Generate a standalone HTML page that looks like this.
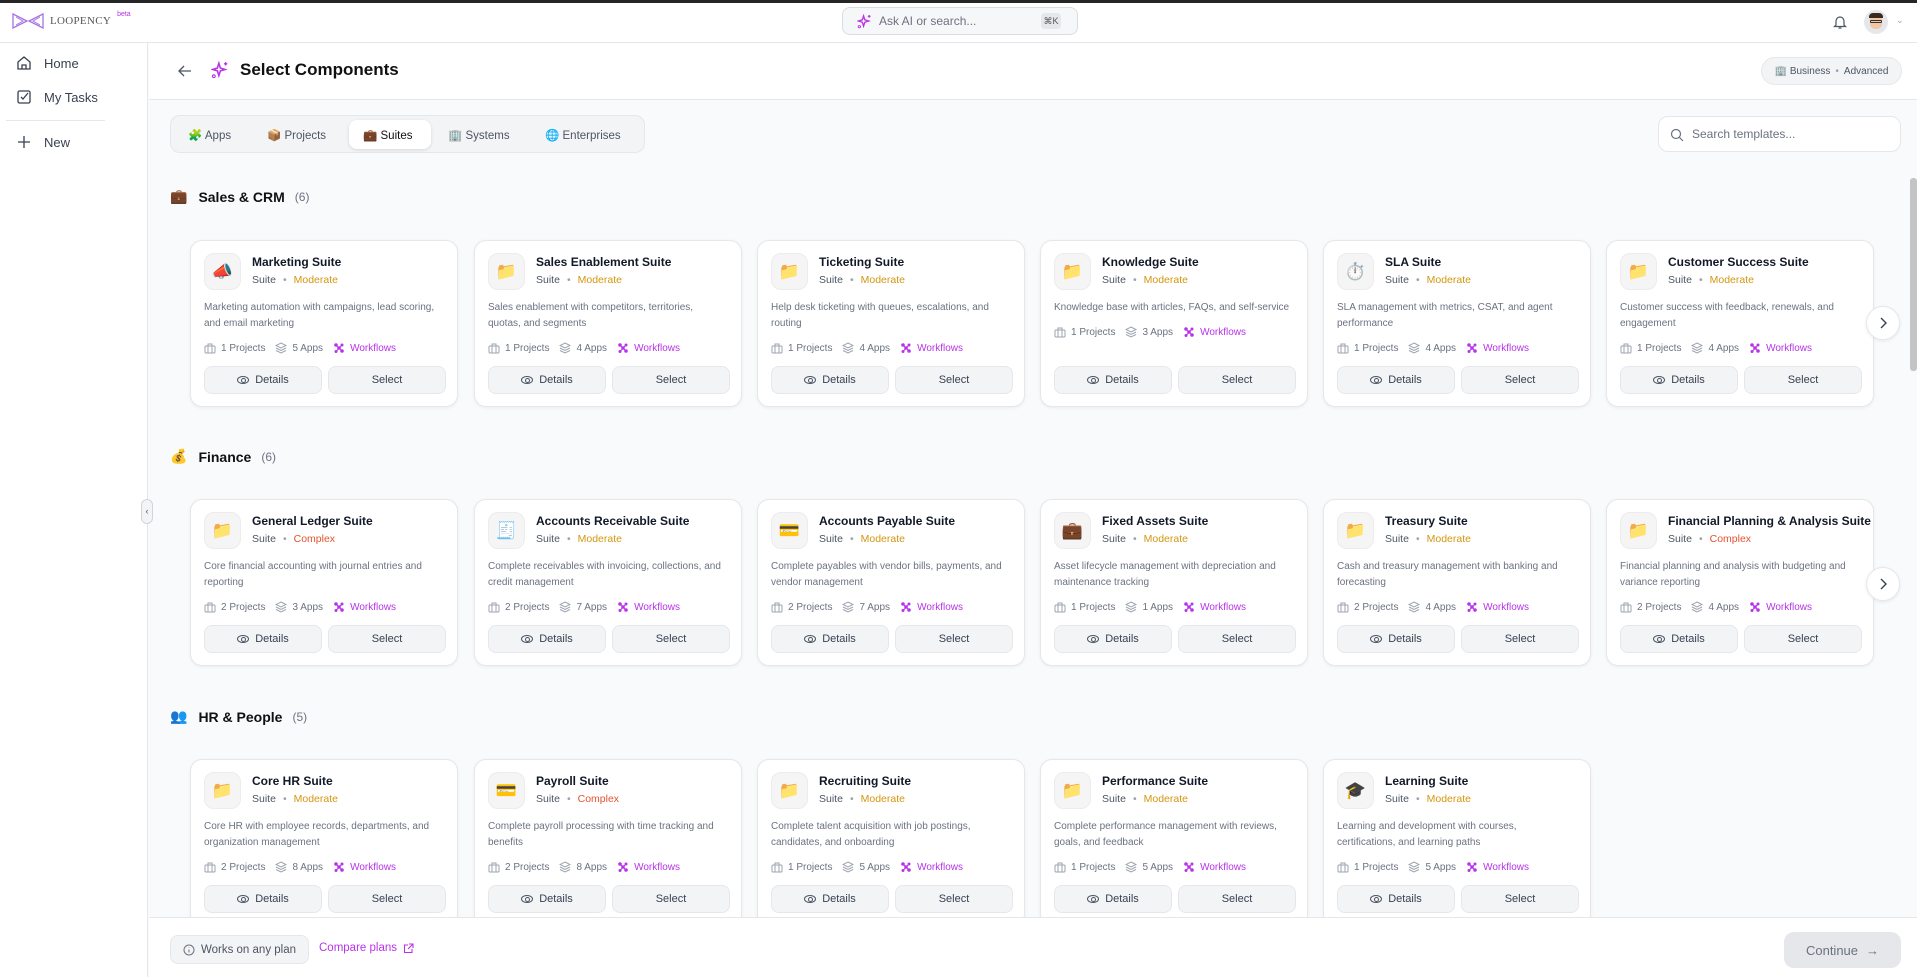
<!DOCTYPE html>
<html><head><meta charset="utf-8">
<style>
*{box-sizing:border-box;margin:0;padding:0}
body{width:1917px;height:977px;overflow:hidden;background:#f9fafb;font-family:"Liberation Sans","DejaVu Sans",sans-serif;color:#111827;position:relative}
.abs{position:absolute}
.topbar{left:0;top:0;width:1917px;height:3px;background:#262626}
.header{left:0;top:3px;width:1917px;height:40px;background:#fff;border-bottom:1px solid #e5e7eb}
.side{left:0;top:43px;width:148px;height:934px;background:#fff;border-right:1px solid #e5e7eb}
.navi{position:absolute;left:16px;display:flex;align-items:center;gap:12px;font-size:13px;color:#374151}
.pagehead{left:149px;top:43px;width:1768px;height:57px;background:#fff;border-bottom:1px solid #e5e7eb}
.tabs{left:170px;top:115px;width:475px;height:38px;background:#f3f4f6;border:1px solid #e5e7eb;border-radius:10px}
.tab{position:absolute;top:4px;height:29px;display:flex;align-items:center;gap:7px;font-size:11.5px;color:#4b5563;padding:0 10px;white-space:nowrap}
.tab.on{background:#fff;border-radius:8px;box-shadow:0 1px 3px rgba(0,0,0,.12);color:#111;padding:0 14px;width:82px}
.sect{position:absolute;left:170px;display:flex;align-items:center;font-size:14px;font-weight:bold;color:#111}
.sect .cnt{font-weight:normal;color:#6b7280;font-size:12px;margin-left:10px}
.row{position:absolute;left:186px;width:1690px;height:180px;overflow:hidden}
.card{position:absolute;top:4px;width:268px;height:167px;background:#fff;border:1px solid #e5e7eb;border-radius:12px;box-shadow:0 1px 3px rgba(0,0,0,.06)}
.ic{position:absolute;left:13px;top:12px;width:37px;height:37px;border-radius:10px;background:#f5f5f6;border:1px solid #ececee;display:flex;align-items:center;justify-content:center;font-size:17px}
.tt{position:absolute;left:61px;top:14px;font-size:12px;font-weight:bold;color:#111827;white-space:nowrap}
.sub{position:absolute;left:61px;top:33px;font-size:10.5px;color:#4b5563;white-space:nowrap}
.sub .d{color:#9ca3af;margin:0 7px}
.mod{color:#d4960f}.cpx{color:#e4532e}
.body{position:absolute;left:13px;top:59px;width:240px}
.desc{font-size:10px;line-height:16px;color:#6b7280}
.stats{margin-top:9px;display:flex;align-items:center;font-size:10px;color:#6b7280;height:14px;white-space:nowrap}
.stats svg{margin-right:5px}
.stats .s{display:flex;align-items:center;margin-right:10px}
.wf{color:#b833e8}
.btn{position:absolute;top:125px;height:28px;border:1px solid #e5e7eb;background:#f3f4f6;border-radius:8px;display:flex;align-items:center;justify-content:center;font-size:11px;color:#374151;gap:6px}
.b1{left:13px;width:118px}.b2{left:137px;width:118px}
.chev{position:absolute;left:1866px;width:34px;height:34px;border-radius:50%;background:#fff;border:1px solid #e5e7eb;display:flex;align-items:center;justify-content:center;box-shadow:0 1px 3px rgba(0,0,0,.08)}
.footer{left:149px;top:917px;width:1768px;height:60px;background:#fff;border-top:1px solid #e5e7eb}
.eye{width:12px;height:8px;border:1.2px solid #4b5563;border-radius:50%;position:relative;display:inline-block}
.eye:after{content:"";position:absolute;left:3px;top:1.2px;width:3px;height:3px;border:1.2px solid #4b5563;border-radius:50%}
</style></head><body>
<div class="abs topbar"></div>
<div class="abs header">
  <div class="abs" style="left:12px;top:10px;display:flex;align-items:center;gap:6px">
    <svg width="32" height="16" viewBox="0 0 32 16"><path d="M1 1 L15 8 L1 15 Z M31 1 L17 8 L31 15 Z" fill="none" stroke="#a873e0" stroke-width="1.3"/><path d="M4 4 L11 8 L4 12 M28 4 L21 8 L28 12" fill="none" stroke="#a873e0" stroke-width="1"/></svg>
    <span style="font-family:'Liberation Serif',serif;font-size:11px;color:#555;letter-spacing:.3px">LOOPENCY</span>
    <span style="position:relative;top:-7px;font-size:7px;color:#b833e8">beta</span>
  </div>
  <div class="abs" style="left:842px;top:4px;width:236px;height:28px;border:1px solid #d9dce1;background:#f6f7f8;border-radius:8px">
    <svg class="abs" style="left:14px;top:6px" width="15" height="15" viewBox="0 0 16 16"><path d="M7 2 L8.3 6.2 L12.5 7.5 L8.3 8.8 L7 13 L5.7 8.8 L1.5 7.5 L5.7 6.2 Z" fill="none" stroke="#b833e8" stroke-width="1.4"/><path d="M13 1v3M11.5 2.5h3" stroke="#b833e8" stroke-width="1.2"/><circle cx="2.5" cy="13.5" r="1.2" fill="none" stroke="#b833e8"/></svg>
    <span class="abs" style="left:36px;top:6px;font-size:12px;color:#6b7280">Ask AI or search...</span>
    <span class="abs" style="left:198px;top:5px;width:20px;height:16px;background:#e5e7eb;border-radius:4px;font-size:9px;color:#555;text-align:center;line-height:16px">⌘K</span>
  </div>
  <svg class="abs" style="left:1833px;top:11px" width="14" height="16" viewBox="0 0 14 16"><path d="M3 11V7a4 4 0 0 1 8 0v4l1.5 1.5h-11z M5.5 14h3" fill="none" stroke="#4b5563" stroke-width="1.2"/></svg>
  <div class="abs" style="left:1864px;top:7px;width:24px;height:24px;border-radius:50%;background:#e5e7eb;overflow:hidden">
    <div class="abs" style="left:6px;top:5px;width:12px;height:14px;border-radius:5px;background:#f1c7a4"></div>
    <div class="abs" style="left:5px;top:3px;width:14px;height:5px;border-radius:4px 4px 0 0;background:#3b2a20"></div>
    <div class="abs" style="left:6px;top:10px;width:12px;height:3px;border:1px solid #333;border-radius:1px"></div>
  </div>
  <span class="abs" style="left:1896px;top:12px;font-size:9px;color:#9ca3af">⌄</span>
</div>
<div class="abs side">
  <div class="navi" style="top:12px"><svg width="16" height="16" viewBox="0 0 16 16"><path d="M2 14V7l6-5 6 5v7z M6 14v-4h4v4" fill="none" stroke="#374151" stroke-width="1.3"/></svg>Home</div>
  <div class="navi" style="top:46px"><svg width="16" height="16" viewBox="0 0 16 16"><rect x="2" y="2" width="12" height="12" rx="1.5" fill="none" stroke="#374151" stroke-width="1.3"/><path d="M5 8l2 2 5-6" fill="none" stroke="#374151" stroke-width="1.3"/></svg>My Tasks</div>
  <div class="abs" style="left:6px;top:77px;width:99px;height:1px;background:#e5e7eb"></div>
  <div class="navi" style="top:91px"><svg width="16" height="16" viewBox="0 0 16 16"><path d="M8 2v12M2 8h12" stroke="#374151" stroke-width="1.3"/></svg>New</div>
</div>
<div class="abs" style="left:141px;top:499px;width:12px;height:25px;border:1px solid #d1d5db;border-radius:6px;background:#f3f4f6;font-size:9px;color:#555;text-align:center;line-height:22px;z-index:3">‹</div>
<div class="abs pagehead">
  <svg class="abs" style="left:29px;top:22px" width="14" height="12" viewBox="0 0 14 12"><path d="M13 6H1M6 1L1 6l5 5" fill="none" stroke="#4b5563" stroke-width="1.3"/></svg>
  <svg class="abs" style="left:62px;top:18px" width="18" height="18" viewBox="0 0 16 16"><path d="M7 2 L8.3 6.2 L12.5 7.5 L8.3 8.8 L7 13 L5.7 8.8 L1.5 7.5 L5.7 6.2 Z" fill="none" stroke="#b833e8" stroke-width="1.4"/><path d="M13 1v3M11.5 2.5h3" stroke="#b833e8" stroke-width="1.2"/><circle cx="2.5" cy="13.5" r="1.2" fill="none" stroke="#b833e8"/></svg>
  <span class="abs" style="left:91px;top:17px;font-size:17px;font-weight:bold;color:#111">Select Components</span>
  <div class="abs" style="left:1612px;top:14px;width:141px;height:28px;border:1px solid #e5e7eb;background:#f3f4f6;border-radius:14px;font-size:10px;color:#4b5563;display:flex;align-items:center;justify-content:center;gap:5px">🏢 Business <span style="color:#9ca3af">•</span> Advanced</div>
</div>
<div class="abs tabs">
  <div class="tab" style="left:7px">🧩 Apps</div>
  <div class="tab" style="left:86px">📦 Projects</div>
  <div class="tab on" style="left:178px">💼 Suites</div>
  <div class="tab" style="left:267px">🏢 Systems</div>
  <div class="tab" style="left:364px">🌐 Enterprises</div>
</div>
<div class="abs" style="left:1658px;top:116px;width:243px;height:36px;background:#fff;border:1px solid #e5e7eb;border-radius:10px">
  <svg class="abs" style="left:11px;top:11px" width="14" height="14" viewBox="0 0 14 14"><circle cx="6" cy="6" r="4.5" fill="none" stroke="#6b7280" stroke-width="1.2"/><path d="M9.5 9.5L13 13" stroke="#6b7280" stroke-width="1.2"/></svg>
  <span class="abs" style="left:33px;top:10px;font-size:12px;color:#6b7280">Search templates...</span>
</div>
<div class="abs" style="left:1910px;top:178px;width:7px;height:193px;background:#c4c4c4;border-radius:3px"></div>

<!-- Sales & CRM -->
<div class="sect" style="top:188px">💼<span style="margin-left:11px">Sales &amp; CRM</span><span class="cnt">(6)</span></div>
<div class="row" style="top:236px">
 <div class="card" style="left:4px"><div class="ic">📣</div><div class="tt">Marketing Suite</div><div class="sub">Suite<span class="d">•</span><span class="mod">Moderate</span></div><div class="body"><div class="desc">Marketing automation with campaigns, lead scoring, and email marketing</div><div class="stats"><span class="s"><svg width="12" height="11" viewBox="0 0 12 11"><rect x="1" y="3" width="10" height="7" rx="1" fill="none" stroke="#9ca3af"/><path d="M4 3V1h4v2M4 3v7M8 3v7" fill="none" stroke="#9ca3af"/></svg>1 Projects</span><span class="s"><svg width="12" height="12" viewBox="0 0 12 12"><path d="M6 1L11 3.5 6 6 1 3.5z M1 6l5 2.5L11 6 M1 8.5L6 11l5-2.5" fill="none" stroke="#9ca3af"/></svg>5 Apps</span><span class="s wf"><svg width="12" height="12" viewBox="0 0 12 12"><g fill="#b833e8"><circle cx="3" cy="3" r="1.8"/><circle cx="9" cy="3" r="1.5"/><circle cx="6" cy="6" r="1.8"/><circle cx="3" cy="9.5" r="1.5"/><circle cx="9" cy="9" r="1.8"/></g><path d="M3 3L9 9M9 3L3 9.5" stroke="#b833e8"/></svg>Workflows</span></div></div><div class="btn b1"><span class="eye"></span> Details</div><div class="btn b2">Select</div></div>
 <div class="card" style="left:288px"><div class="ic">📁</div><div class="tt">Sales Enablement Suite</div><div class="sub">Suite<span class="d">•</span><span class="mod">Moderate</span></div><div class="body"><div class="desc">Sales enablement with competitors, territories, quotas, and segments</div><div class="stats"><span class="s"><svg width="12" height="11" viewBox="0 0 12 11"><rect x="1" y="3" width="10" height="7" rx="1" fill="none" stroke="#9ca3af"/><path d="M4 3V1h4v2M4 3v7M8 3v7" fill="none" stroke="#9ca3af"/></svg>1 Projects</span><span class="s"><svg width="12" height="12" viewBox="0 0 12 12"><path d="M6 1L11 3.5 6 6 1 3.5z M1 6l5 2.5L11 6 M1 8.5L6 11l5-2.5" fill="none" stroke="#9ca3af"/></svg>4 Apps</span><span class="s wf"><svg width="12" height="12" viewBox="0 0 12 12"><g fill="#b833e8"><circle cx="3" cy="3" r="1.8"/><circle cx="9" cy="3" r="1.5"/><circle cx="6" cy="6" r="1.8"/><circle cx="3" cy="9.5" r="1.5"/><circle cx="9" cy="9" r="1.8"/></g><path d="M3 3L9 9M9 3L3 9.5" stroke="#b833e8"/></svg>Workflows</span></div></div><div class="btn b1"><span class="eye"></span> Details</div><div class="btn b2">Select</div></div>
 <div class="card" style="left:571px"><div class="ic">📁</div><div class="tt">Ticketing Suite</div><div class="sub">Suite<span class="d">•</span><span class="mod">Moderate</span></div><div class="body"><div class="desc">Help desk ticketing with queues, escalations, and routing</div><div class="stats"><span class="s"><svg width="12" height="11" viewBox="0 0 12 11"><rect x="1" y="3" width="10" height="7" rx="1" fill="none" stroke="#9ca3af"/><path d="M4 3V1h4v2M4 3v7M8 3v7" fill="none" stroke="#9ca3af"/></svg>1 Projects</span><span class="s"><svg width="12" height="12" viewBox="0 0 12 12"><path d="M6 1L11 3.5 6 6 1 3.5z M1 6l5 2.5L11 6 M1 8.5L6 11l5-2.5" fill="none" stroke="#9ca3af"/></svg>4 Apps</span><span class="s wf"><svg width="12" height="12" viewBox="0 0 12 12"><g fill="#b833e8"><circle cx="3" cy="3" r="1.8"/><circle cx="9" cy="3" r="1.5"/><circle cx="6" cy="6" r="1.8"/><circle cx="3" cy="9.5" r="1.5"/><circle cx="9" cy="9" r="1.8"/></g><path d="M3 3L9 9M9 3L3 9.5" stroke="#b833e8"/></svg>Workflows</span></div></div><div class="btn b1"><span class="eye"></span> Details</div><div class="btn b2">Select</div></div>
 <div class="card" style="left:854px"><div class="ic">📁</div><div class="tt">Knowledge Suite</div><div class="sub">Suite<span class="d">•</span><span class="mod">Moderate</span></div><div class="body"><div class="desc">Knowledge base with articles, FAQs, and self-service</div><div class="stats"><span class="s"><svg width="12" height="11" viewBox="0 0 12 11"><rect x="1" y="3" width="10" height="7" rx="1" fill="none" stroke="#9ca3af"/><path d="M4 3V1h4v2M4 3v7M8 3v7" fill="none" stroke="#9ca3af"/></svg>1 Projects</span><span class="s"><svg width="12" height="12" viewBox="0 0 12 12"><path d="M6 1L11 3.5 6 6 1 3.5z M1 6l5 2.5L11 6 M1 8.5L6 11l5-2.5" fill="none" stroke="#9ca3af"/></svg>3 Apps</span><span class="s wf"><svg width="12" height="12" viewBox="0 0 12 12"><g fill="#b833e8"><circle cx="3" cy="3" r="1.8"/><circle cx="9" cy="3" r="1.5"/><circle cx="6" cy="6" r="1.8"/><circle cx="3" cy="9.5" r="1.5"/><circle cx="9" cy="9" r="1.8"/></g><path d="M3 3L9 9M9 3L3 9.5" stroke="#b833e8"/></svg>Workflows</span></div></div><div class="btn b1"><span class="eye"></span> Details</div><div class="btn b2">Select</div></div>
 <div class="card" style="left:1137px"><div class="ic">⏱️</div><div class="tt">SLA Suite</div><div class="sub">Suite<span class="d">•</span><span class="mod">Moderate</span></div><div class="body"><div class="desc">SLA management with metrics, CSAT, and agent performance</div><div class="stats"><span class="s"><svg width="12" height="11" viewBox="0 0 12 11"><rect x="1" y="3" width="10" height="7" rx="1" fill="none" stroke="#9ca3af"/><path d="M4 3V1h4v2M4 3v7M8 3v7" fill="none" stroke="#9ca3af"/></svg>1 Projects</span><span class="s"><svg width="12" height="12" viewBox="0 0 12 12"><path d="M6 1L11 3.5 6 6 1 3.5z M1 6l5 2.5L11 6 M1 8.5L6 11l5-2.5" fill="none" stroke="#9ca3af"/></svg>4 Apps</span><span class="s wf"><svg width="12" height="12" viewBox="0 0 12 12"><g fill="#b833e8"><circle cx="3" cy="3" r="1.8"/><circle cx="9" cy="3" r="1.5"/><circle cx="6" cy="6" r="1.8"/><circle cx="3" cy="9.5" r="1.5"/><circle cx="9" cy="9" r="1.8"/></g><path d="M3 3L9 9M9 3L3 9.5" stroke="#b833e8"/></svg>Workflows</span></div></div><div class="btn b1"><span class="eye"></span> Details</div><div class="btn b2">Select</div></div>
 <div class="card" style="left:1420px"><div class="ic">📁</div><div class="tt">Customer Success Suite</div><div class="sub">Suite<span class="d">•</span><span class="mod">Moderate</span></div><div class="body"><div class="desc">Customer success with feedback, renewals, and engagement</div><div class="stats"><span class="s"><svg width="12" height="11" viewBox="0 0 12 11"><rect x="1" y="3" width="10" height="7" rx="1" fill="none" stroke="#9ca3af"/><path d="M4 3V1h4v2M4 3v7M8 3v7" fill="none" stroke="#9ca3af"/></svg>1 Projects</span><span class="s"><svg width="12" height="12" viewBox="0 0 12 12"><path d="M6 1L11 3.5 6 6 1 3.5z M1 6l5 2.5L11 6 M1 8.5L6 11l5-2.5" fill="none" stroke="#9ca3af"/></svg>4 Apps</span><span class="s wf"><svg width="12" height="12" viewBox="0 0 12 12"><g fill="#b833e8"><circle cx="3" cy="3" r="1.8"/><circle cx="9" cy="3" r="1.5"/><circle cx="6" cy="6" r="1.8"/><circle cx="3" cy="9.5" r="1.5"/><circle cx="9" cy="9" r="1.8"/></g><path d="M3 3L9 9M9 3L3 9.5" stroke="#b833e8"/></svg>Workflows</span></div></div><div class="btn b1"><span class="eye"></span> Details</div><div class="btn b2">Select</div></div>
</div>
<div class="chev" style="top:306px"><svg width="8" height="12" viewBox="0 0 8 12"><path d="M2 1l5 5-5 5" fill="none" stroke="#374151" stroke-width="1.4"/></svg></div>

<!-- Finance -->
<div class="sect" style="top:448px">💰<span style="margin-left:11px">Finance</span><span class="cnt">(6)</span></div>
<div class="row" style="top:495px">
 <div class="card" style="left:4px"><div class="ic">📁</div><div class="tt">General Ledger Suite</div><div class="sub">Suite<span class="d">•</span><span class="cpx">Complex</span></div><div class="body"><div class="desc">Core financial accounting with journal entries and reporting</div><div class="stats"><span class="s"><svg width="12" height="11" viewBox="0 0 12 11"><rect x="1" y="3" width="10" height="7" rx="1" fill="none" stroke="#9ca3af"/><path d="M4 3V1h4v2M4 3v7M8 3v7" fill="none" stroke="#9ca3af"/></svg>2 Projects</span><span class="s"><svg width="12" height="12" viewBox="0 0 12 12"><path d="M6 1L11 3.5 6 6 1 3.5z M1 6l5 2.5L11 6 M1 8.5L6 11l5-2.5" fill="none" stroke="#9ca3af"/></svg>3 Apps</span><span class="s wf"><svg width="12" height="12" viewBox="0 0 12 12"><g fill="#b833e8"><circle cx="3" cy="3" r="1.8"/><circle cx="9" cy="3" r="1.5"/><circle cx="6" cy="6" r="1.8"/><circle cx="3" cy="9.5" r="1.5"/><circle cx="9" cy="9" r="1.8"/></g><path d="M3 3L9 9M9 3L3 9.5" stroke="#b833e8"/></svg>Workflows</span></div></div><div class="btn b1"><span class="eye"></span> Details</div><div class="btn b2">Select</div></div>
 <div class="card" style="left:288px"><div class="ic">🧾</div><div class="tt">Accounts Receivable Suite</div><div class="sub">Suite<span class="d">•</span><span class="mod">Moderate</span></div><div class="body"><div class="desc">Complete receivables with invoicing, collections, and credit management</div><div class="stats"><span class="s"><svg width="12" height="11" viewBox="0 0 12 11"><rect x="1" y="3" width="10" height="7" rx="1" fill="none" stroke="#9ca3af"/><path d="M4 3V1h4v2M4 3v7M8 3v7" fill="none" stroke="#9ca3af"/></svg>2 Projects</span><span class="s"><svg width="12" height="12" viewBox="0 0 12 12"><path d="M6 1L11 3.5 6 6 1 3.5z M1 6l5 2.5L11 6 M1 8.5L6 11l5-2.5" fill="none" stroke="#9ca3af"/></svg>7 Apps</span><span class="s wf"><svg width="12" height="12" viewBox="0 0 12 12"><g fill="#b833e8"><circle cx="3" cy="3" r="1.8"/><circle cx="9" cy="3" r="1.5"/><circle cx="6" cy="6" r="1.8"/><circle cx="3" cy="9.5" r="1.5"/><circle cx="9" cy="9" r="1.8"/></g><path d="M3 3L9 9M9 3L3 9.5" stroke="#b833e8"/></svg>Workflows</span></div></div><div class="btn b1"><span class="eye"></span> Details</div><div class="btn b2">Select</div></div>
 <div class="card" style="left:571px"><div class="ic">💳</div><div class="tt">Accounts Payable Suite</div><div class="sub">Suite<span class="d">•</span><span class="mod">Moderate</span></div><div class="body"><div class="desc">Complete payables with vendor bills, payments, and vendor management</div><div class="stats"><span class="s"><svg width="12" height="11" viewBox="0 0 12 11"><rect x="1" y="3" width="10" height="7" rx="1" fill="none" stroke="#9ca3af"/><path d="M4 3V1h4v2M4 3v7M8 3v7" fill="none" stroke="#9ca3af"/></svg>2 Projects</span><span class="s"><svg width="12" height="12" viewBox="0 0 12 12"><path d="M6 1L11 3.5 6 6 1 3.5z M1 6l5 2.5L11 6 M1 8.5L6 11l5-2.5" fill="none" stroke="#9ca3af"/></svg>7 Apps</span><span class="s wf"><svg width="12" height="12" viewBox="0 0 12 12"><g fill="#b833e8"><circle cx="3" cy="3" r="1.8"/><circle cx="9" cy="3" r="1.5"/><circle cx="6" cy="6" r="1.8"/><circle cx="3" cy="9.5" r="1.5"/><circle cx="9" cy="9" r="1.8"/></g><path d="M3 3L9 9M9 3L3 9.5" stroke="#b833e8"/></svg>Workflows</span></div></div><div class="btn b1"><span class="eye"></span> Details</div><div class="btn b2">Select</div></div>
 <div class="card" style="left:854px"><div class="ic">💼</div><div class="tt">Fixed Assets Suite</div><div class="sub">Suite<span class="d">•</span><span class="mod">Moderate</span></div><div class="body"><div class="desc">Asset lifecycle management with depreciation and maintenance tracking</div><div class="stats"><span class="s"><svg width="12" height="11" viewBox="0 0 12 11"><rect x="1" y="3" width="10" height="7" rx="1" fill="none" stroke="#9ca3af"/><path d="M4 3V1h4v2M4 3v7M8 3v7" fill="none" stroke="#9ca3af"/></svg>1 Projects</span><span class="s"><svg width="12" height="12" viewBox="0 0 12 12"><path d="M6 1L11 3.5 6 6 1 3.5z M1 6l5 2.5L11 6 M1 8.5L6 11l5-2.5" fill="none" stroke="#9ca3af"/></svg>1 Apps</span><span class="s wf"><svg width="12" height="12" viewBox="0 0 12 12"><g fill="#b833e8"><circle cx="3" cy="3" r="1.8"/><circle cx="9" cy="3" r="1.5"/><circle cx="6" cy="6" r="1.8"/><circle cx="3" cy="9.5" r="1.5"/><circle cx="9" cy="9" r="1.8"/></g><path d="M3 3L9 9M9 3L3 9.5" stroke="#b833e8"/></svg>Workflows</span></div></div><div class="btn b1"><span class="eye"></span> Details</div><div class="btn b2">Select</div></div>
 <div class="card" style="left:1137px"><div class="ic">📁</div><div class="tt">Treasury Suite</div><div class="sub">Suite<span class="d">•</span><span class="mod">Moderate</span></div><div class="body"><div class="desc">Cash and treasury management with banking and forecasting</div><div class="stats"><span class="s"><svg width="12" height="11" viewBox="0 0 12 11"><rect x="1" y="3" width="10" height="7" rx="1" fill="none" stroke="#9ca3af"/><path d="M4 3V1h4v2M4 3v7M8 3v7" fill="none" stroke="#9ca3af"/></svg>2 Projects</span><span class="s"><svg width="12" height="12" viewBox="0 0 12 12"><path d="M6 1L11 3.5 6 6 1 3.5z M1 6l5 2.5L11 6 M1 8.5L6 11l5-2.5" fill="none" stroke="#9ca3af"/></svg>4 Apps</span><span class="s wf"><svg width="12" height="12" viewBox="0 0 12 12"><g fill="#b833e8"><circle cx="3" cy="3" r="1.8"/><circle cx="9" cy="3" r="1.5"/><circle cx="6" cy="6" r="1.8"/><circle cx="3" cy="9.5" r="1.5"/><circle cx="9" cy="9" r="1.8"/></g><path d="M3 3L9 9M9 3L3 9.5" stroke="#b833e8"/></svg>Workflows</span></div></div><div class="btn b1"><span class="eye"></span> Details</div><div class="btn b2">Select</div></div>
 <div class="card" style="left:1420px"><div class="ic">📁</div><div class="tt">Financial Planning &amp; Analysis Suite</div><div class="sub">Suite<span class="d">•</span><span class="cpx">Complex</span></div><div class="body"><div class="desc">Financial planning and analysis with budgeting and variance reporting</div><div class="stats"><span class="s"><svg width="12" height="11" viewBox="0 0 12 11"><rect x="1" y="3" width="10" height="7" rx="1" fill="none" stroke="#9ca3af"/><path d="M4 3V1h4v2M4 3v7M8 3v7" fill="none" stroke="#9ca3af"/></svg>2 Projects</span><span class="s"><svg width="12" height="12" viewBox="0 0 12 12"><path d="M6 1L11 3.5 6 6 1 3.5z M1 6l5 2.5L11 6 M1 8.5L6 11l5-2.5" fill="none" stroke="#9ca3af"/></svg>4 Apps</span><span class="s wf"><svg width="12" height="12" viewBox="0 0 12 12"><g fill="#b833e8"><circle cx="3" cy="3" r="1.8"/><circle cx="9" cy="3" r="1.5"/><circle cx="6" cy="6" r="1.8"/><circle cx="3" cy="9.5" r="1.5"/><circle cx="9" cy="9" r="1.8"/></g><path d="M3 3L9 9M9 3L3 9.5" stroke="#b833e8"/></svg>Workflows</span></div></div><div class="btn b1"><span class="eye"></span> Details</div><div class="btn b2">Select</div></div>
</div>
<div class="chev" style="top:567px"><svg width="8" height="12" viewBox="0 0 8 12"><path d="M2 1l5 5-5 5" fill="none" stroke="#374151" stroke-width="1.4"/></svg></div>

<!-- HR -->
<div class="sect" style="top:708px">👥<span style="margin-left:11px">HR &amp; People</span><span class="cnt">(5)</span></div>
<div class="row" style="top:755px">
 <div class="card" style="left:4px"><div class="ic">📁</div><div class="tt">Core HR Suite</div><div class="sub">Suite<span class="d">•</span><span class="mod">Moderate</span></div><div class="body"><div class="desc">Core HR with employee records, departments, and organization management</div><div class="stats"><span class="s"><svg width="12" height="11" viewBox="0 0 12 11"><rect x="1" y="3" width="10" height="7" rx="1" fill="none" stroke="#9ca3af"/><path d="M4 3V1h4v2M4 3v7M8 3v7" fill="none" stroke="#9ca3af"/></svg>2 Projects</span><span class="s"><svg width="12" height="12" viewBox="0 0 12 12"><path d="M6 1L11 3.5 6 6 1 3.5z M1 6l5 2.5L11 6 M1 8.5L6 11l5-2.5" fill="none" stroke="#9ca3af"/></svg>8 Apps</span><span class="s wf"><svg width="12" height="12" viewBox="0 0 12 12"><g fill="#b833e8"><circle cx="3" cy="3" r="1.8"/><circle cx="9" cy="3" r="1.5"/><circle cx="6" cy="6" r="1.8"/><circle cx="3" cy="9.5" r="1.5"/><circle cx="9" cy="9" r="1.8"/></g><path d="M3 3L9 9M9 3L3 9.5" stroke="#b833e8"/></svg>Workflows</span></div></div><div class="btn b1"><span class="eye"></span> Details</div><div class="btn b2">Select</div></div>
 <div class="card" style="left:288px"><div class="ic">💳</div><div class="tt">Payroll Suite</div><div class="sub">Suite<span class="d">•</span><span class="cpx">Complex</span></div><div class="body"><div class="desc">Complete payroll processing with time tracking and benefits</div><div class="stats"><span class="s"><svg width="12" height="11" viewBox="0 0 12 11"><rect x="1" y="3" width="10" height="7" rx="1" fill="none" stroke="#9ca3af"/><path d="M4 3V1h4v2M4 3v7M8 3v7" fill="none" stroke="#9ca3af"/></svg>2 Projects</span><span class="s"><svg width="12" height="12" viewBox="0 0 12 12"><path d="M6 1L11 3.5 6 6 1 3.5z M1 6l5 2.5L11 6 M1 8.5L6 11l5-2.5" fill="none" stroke="#9ca3af"/></svg>8 Apps</span><span class="s wf"><svg width="12" height="12" viewBox="0 0 12 12"><g fill="#b833e8"><circle cx="3" cy="3" r="1.8"/><circle cx="9" cy="3" r="1.5"/><circle cx="6" cy="6" r="1.8"/><circle cx="3" cy="9.5" r="1.5"/><circle cx="9" cy="9" r="1.8"/></g><path d="M3 3L9 9M9 3L3 9.5" stroke="#b833e8"/></svg>Workflows</span></div></div><div class="btn b1"><span class="eye"></span> Details</div><div class="btn b2">Select</div></div>
 <div class="card" style="left:571px"><div class="ic">📁</div><div class="tt">Recruiting Suite</div><div class="sub">Suite<span class="d">•</span><span class="mod">Moderate</span></div><div class="body"><div class="desc">Complete talent acquisition with job postings, candidates, and onboarding</div><div class="stats"><span class="s"><svg width="12" height="11" viewBox="0 0 12 11"><rect x="1" y="3" width="10" height="7" rx="1" fill="none" stroke="#9ca3af"/><path d="M4 3V1h4v2M4 3v7M8 3v7" fill="none" stroke="#9ca3af"/></svg>1 Projects</span><span class="s"><svg width="12" height="12" viewBox="0 0 12 12"><path d="M6 1L11 3.5 6 6 1 3.5z M1 6l5 2.5L11 6 M1 8.5L6 11l5-2.5" fill="none" stroke="#9ca3af"/></svg>5 Apps</span><span class="s wf"><svg width="12" height="12" viewBox="0 0 12 12"><g fill="#b833e8"><circle cx="3" cy="3" r="1.8"/><circle cx="9" cy="3" r="1.5"/><circle cx="6" cy="6" r="1.8"/><circle cx="3" cy="9.5" r="1.5"/><circle cx="9" cy="9" r="1.8"/></g><path d="M3 3L9 9M9 3L3 9.5" stroke="#b833e8"/></svg>Workflows</span></div></div><div class="btn b1"><span class="eye"></span> Details</div><div class="btn b2">Select</div></div>
 <div class="card" style="left:854px"><div class="ic">📁</div><div class="tt">Performance Suite</div><div class="sub">Suite<span class="d">•</span><span class="mod">Moderate</span></div><div class="body"><div class="desc">Complete performance management with reviews, goals, and feedback</div><div class="stats"><span class="s"><svg width="12" height="11" viewBox="0 0 12 11"><rect x="1" y="3" width="10" height="7" rx="1" fill="none" stroke="#9ca3af"/><path d="M4 3V1h4v2M4 3v7M8 3v7" fill="none" stroke="#9ca3af"/></svg>1 Projects</span><span class="s"><svg width="12" height="12" viewBox="0 0 12 12"><path d="M6 1L11 3.5 6 6 1 3.5z M1 6l5 2.5L11 6 M1 8.5L6 11l5-2.5" fill="none" stroke="#9ca3af"/></svg>5 Apps</span><span class="s wf"><svg width="12" height="12" viewBox="0 0 12 12"><g fill="#b833e8"><circle cx="3" cy="3" r="1.8"/><circle cx="9" cy="3" r="1.5"/><circle cx="6" cy="6" r="1.8"/><circle cx="3" cy="9.5" r="1.5"/><circle cx="9" cy="9" r="1.8"/></g><path d="M3 3L9 9M9 3L3 9.5" stroke="#b833e8"/></svg>Workflows</span></div></div><div class="btn b1"><span class="eye"></span> Details</div><div class="btn b2">Select</div></div>
 <div class="card" style="left:1137px"><div class="ic">🎓</div><div class="tt">Learning Suite</div><div class="sub">Suite<span class="d">•</span><span class="mod">Moderate</span></div><div class="body"><div class="desc">Learning and development with courses, certifications, and learning paths</div><div class="stats"><span class="s"><svg width="12" height="11" viewBox="0 0 12 11"><rect x="1" y="3" width="10" height="7" rx="1" fill="none" stroke="#9ca3af"/><path d="M4 3V1h4v2M4 3v7M8 3v7" fill="none" stroke="#9ca3af"/></svg>1 Projects</span><span class="s"><svg width="12" height="12" viewBox="0 0 12 12"><path d="M6 1L11 3.5 6 6 1 3.5z M1 6l5 2.5L11 6 M1 8.5L6 11l5-2.5" fill="none" stroke="#9ca3af"/></svg>5 Apps</span><span class="s wf"><svg width="12" height="12" viewBox="0 0 12 12"><g fill="#b833e8"><circle cx="3" cy="3" r="1.8"/><circle cx="9" cy="3" r="1.5"/><circle cx="6" cy="6" r="1.8"/><circle cx="3" cy="9.5" r="1.5"/><circle cx="9" cy="9" r="1.8"/></g><path d="M3 3L9 9M9 3L3 9.5" stroke="#b833e8"/></svg>Workflows</span></div></div><div class="btn b1"><span class="eye"></span> Details</div><div class="btn b2">Select</div></div>
</div>

<div class="abs footer">
  <div class="abs" style="left:21px;top:17px;width:139px;height:29px;border:1px solid #e5e7eb;background:#f3f4f6;border-radius:8px;display:flex;align-items:center;justify-content:center;gap:6px;font-size:11.5px;color:#4b5563"><svg width="12" height="12" viewBox="0 0 12 12"><circle cx="6" cy="6" r="5" fill="none" stroke="#6b7280"/><path d="M6 5.5v3M6 3.5v.5" stroke="#6b7280"/></svg>Works on any plan</div>
  <div class="abs" style="left:170px;top:24px;font-size:11.5px;color:#b833e8;display:flex;align-items:center;gap:6px">Compare plans <svg width="11" height="11" viewBox="0 0 11 11"><path d="M5 2H1.5v7.5H9V6M6 1h4v4M10 1L5 6" fill="none" stroke="#b833e8" stroke-width="1.1"/></svg></div>
  <div class="abs" style="left:1635px;top:14px;width:117px;height:36px;background:#e5e7eb;border-radius:10px;display:flex;align-items:center;justify-content:center;gap:8px;font-size:13px;color:#6b7280">Continue <span>→</span></div>
</div>
</body></html>
